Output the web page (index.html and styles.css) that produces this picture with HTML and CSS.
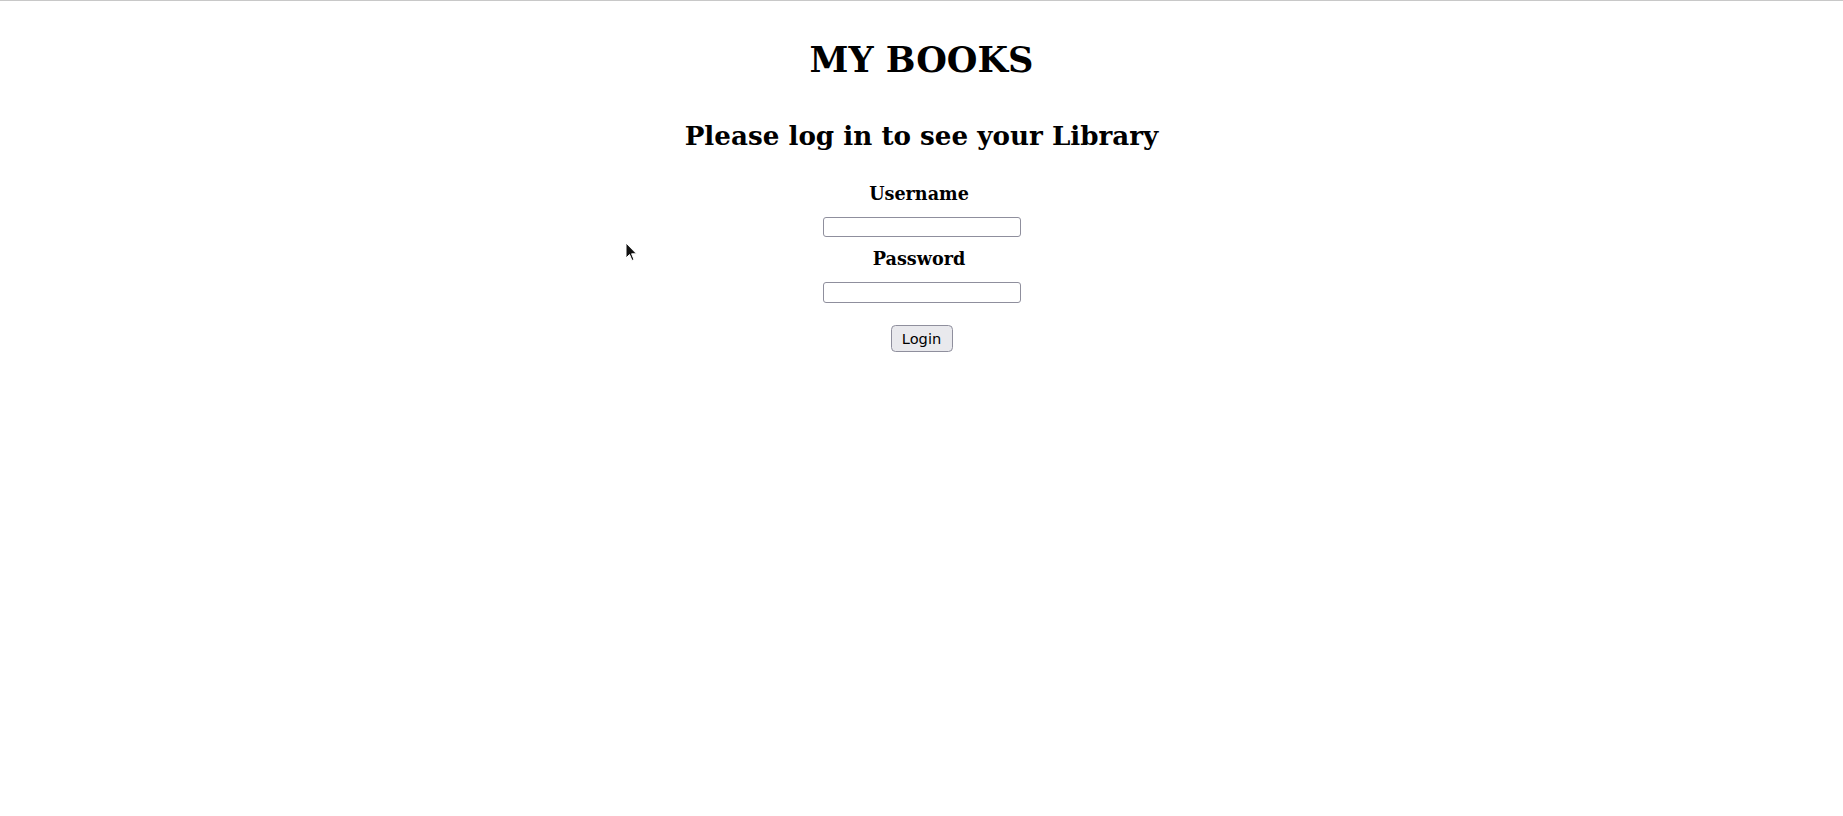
FILE: index.html
```html
<!DOCTYPE html>
<html>
<head>
<meta charset="utf-8">
<title>My Books</title>
<link rel="stylesheet" href="styles.css">
</head>
<body>
<div class="page">
  <h1 class="title">MY BOOKS</h1>
  <h2 class="subtitle">Please log in to see your Library</h2>
  <form class="login">
    <label class="field-label" for="username">Username</label>
    <input class="field-input" id="username" type="text">
    <label class="field-label" for="password">Password</label>
    <input class="field-input" id="password" type="password">
    <button class="login-btn" type="button">Login</button>
  </form>
</div>
<svg class="cursor" width="13" height="21" viewBox="0 0 13 21" aria-hidden="true">
  <path d="M1 1 L1 16 L4.5 12.5 L7 18.5 L9 17.6 L6.6 11.8 L11.5 11.8 Z" fill="#111" stroke="#fff" stroke-width="1" stroke-linejoin="round"/>
</svg>
</body>
</html>
```
FILE: styles.css
```css
html, body {
  margin: 0;
  padding: 0;
  background: #fff;
}
body {
  border-top: 1px solid #c8c8c8;
  font-family: "DejaVu Serif", serif;
  color: #000;
  position: relative;
  min-height: 815px;
}
.page {
  display: flex;
  flex-direction: column;
  align-items: center;
}
.title {
  font-size: 35.2px;
  line-height: 41px;
  font-weight: bold;
  margin: 38px 0 0;
}
.subtitle {
  font-size: 26.2px;
  line-height: 31px;
  font-weight: bold;
  margin: 40px 0 0;
}
.login {
  display: flex;
  flex-direction: column;
  align-items: center;
  margin-top: 33px;
}
.field-label {
  font-weight: bold;
  font-size: 17.6px;
  line-height: 20.5px;
  margin: 0 0 12.4px;
  padding-right: 5px;
}
.field-input + .field-label {
  margin-top: 12px;
}
.field-input {
  box-sizing: border-box;
  width: 198px;
  height: 20.4px;
  border: 1px solid #8f8f9d;
  border-radius: 3px;
  padding: 1px 2px;
  font-size: 14.6px;
  background: #fff;
}
.login-btn {
  box-sizing: border-box;
  margin-top: 22.3px;
  width: 62px;
  height: 26.7px;
  font-family: "DejaVu Sans", sans-serif;
  font-size: 14.6px;
  padding: 0;
  color: #000;
  border: 1px solid #8f8f9d;
  border-radius: 4.5px;
  background: #e9e9ed;
}
.cursor {
  position: absolute;
  left: 625px;
  top: 241px;
}
```
